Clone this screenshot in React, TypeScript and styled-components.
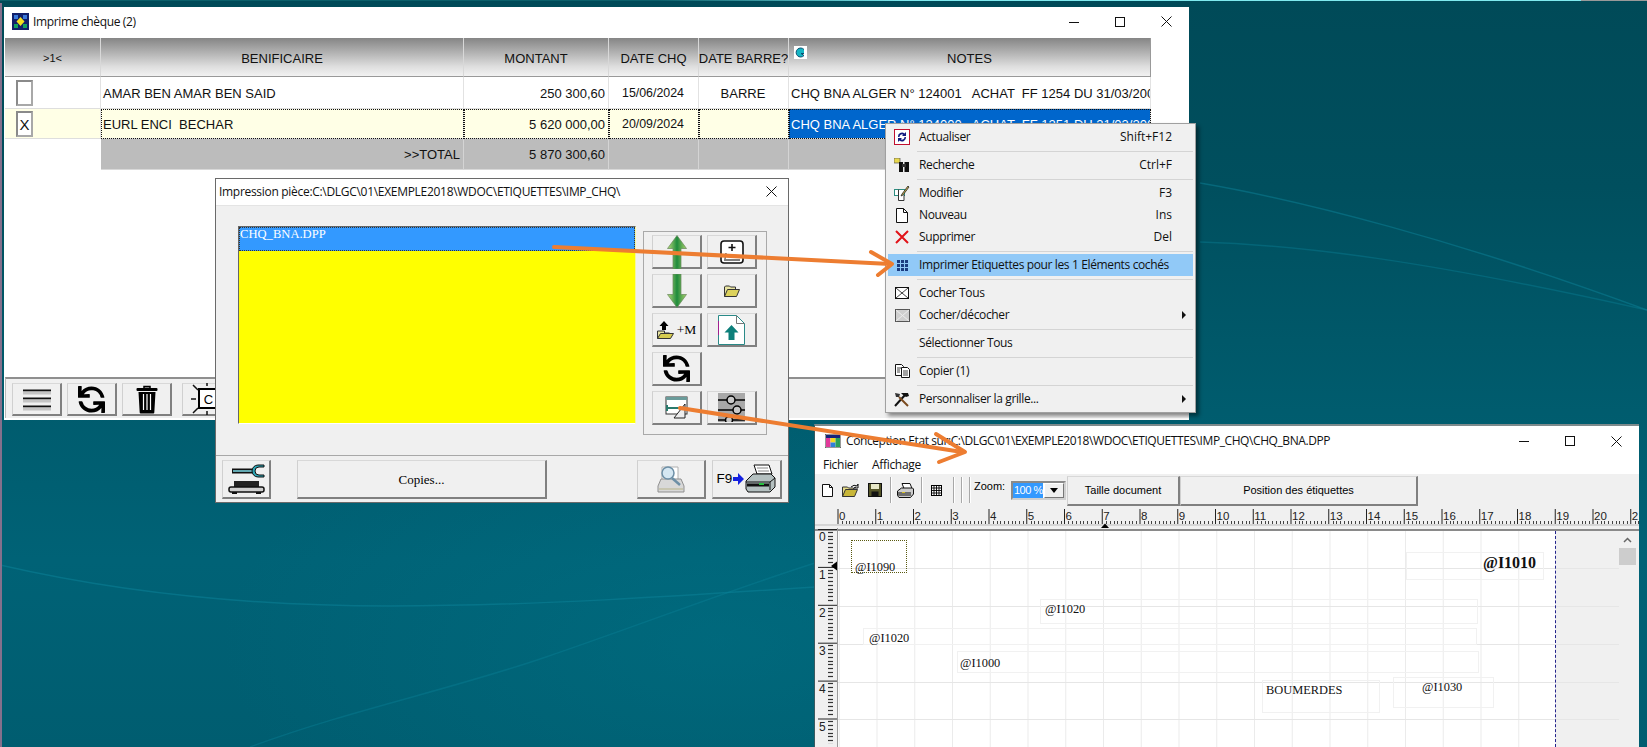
import React from 'react';
import styled, { createGlobalStyle } from 'styled-components';
import { FaSync } from 'react-icons/fa';

const Global = createGlobalStyle`
  html, body { margin: 0; padding: 0; width: 1647px; height: 747px; overflow: hidden; }
  #root { width: 1647px; height: 747px; }
  * { box-sizing: border-box; }
`;

const UI = `"Open Sans", "Noto Sans", sans-serif`;
const ARIAL = `"Liberation Sans", Arial, sans-serif`;
const TIMES = `"Liberation Serif", "Times New Roman", serif`;

const Desktop = styled.div`
  position: relative;
  width: 1647px;
  height: 747px;
  overflow: hidden;
  background:
    radial-gradient(ellipse 500px 240px at 720px 640px, rgba(0, 120, 140, 0.35), transparent),
    linear-gradient(180deg, #004a58 0%, #004f5e 25%, #005c6e 55%, #006276 75%, #005d70 100%);
`;
const Wallpaper = styled.svg`
  position: absolute;
  inset: 0;
`;
const TopLine = styled.div`
  position: absolute;
  left: 0;
  top: 0;
  width: 1647px;
  height: 1px;
  background: linear-gradient(90deg, #0b5f6a 0%, #0b5f6a 40%, #7fe9ee 55%, #7fe9ee 96%, #999 96%);
`;
const LeftEdge = styled.div`
  position: absolute;
  left: 0;
  top: 3px;
  width: 2px;
  bottom: 0;
  background: #84708c;
`;

const Win = styled.div<{ $x: number; $y: number; $w: number; $h: number; $z: number }>`
  position: absolute;
  left: ${p => p.$x}px;
  top: ${p => p.$y}px;
  width: ${p => p.$w}px;
  height: ${p => p.$h}px;
  z-index: ${p => p.$z};
  display: flex;
  flex-direction: column;
  background: #fff;
  overflow: hidden;
`;
const MainWin = styled(Win)``;
const DialogWin = styled(Win)`
  border: 1px solid #6a6a6a;
  background: #f0f0f0;
`;
const DesignWin = styled(Win)`
  border-top: 2px solid #7d8a8c;
  border-left: 1px solid #3a5a60;
`;

const TitleBar = styled.div<{ $h: number; $pb?: number; $ls?: number }>`
  height: ${p => p.$h}px;
  padding-bottom: ${p => p.$pb ?? 0}px;
  flex: none;
  background: #fff;
  display: flex;
  align-items: center;
  font: 12px/16px ${UI};
  letter-spacing: ${p => p.$ls ?? -0.35}px;
  color: #111;
`;
const TitleIcon = styled.span<{ $ml: number; $mr: number }>`
  display: inline-flex;
  margin-left: ${p => p.$ml}px;
  margin-right: ${p => p.$mr}px;
`;
const TitleText = styled.span<{ $ml?: number }>`
  flex: 1;
  white-space: pre;
  margin-left: ${p => p.$ml ?? 0}px;
`;
const Ctl = styled.span<{ $w?: number }>`
  width: ${p => p.$w ?? 46}px;
  height: 100%;
  display: inline-flex;
  align-items: center;
  justify-content: center;
`;

const GridWrap = styled.div`
  display: grid;
  grid-template-columns: 96px 363px 145px 90px 90px 362px;
  grid-template-rows: 39px 32px 30px 31px;
  margin-left: 1px;
  width: 1147px;
  font: 13px/15px ${ARIAL};
  color: #111;
`;
const HeadCell = styled.div<{ $small?: boolean }>`
  background: linear-gradient(180deg, #858585 0%, #b4b4b4 40%, #dedede 75%, #f2f2f2 100%);
  border-right: 1px solid #d8d8d8;
  border-bottom: 1px solid #999;
  padding-top: 2px;
  display: flex;
  align-items: center;
  justify-content: center;
  font-size: ${p => (p.$small ? 11 : 13)}px;
  white-space: nowrap;
  overflow: hidden;
  position: relative;
`;
const NotesHead = styled(HeadCell)`
  border-right: 1px solid #999;
`;
const HeadBadge = styled.span`
  position: absolute;
  left: 5px;
  top: 8px;
  display: inline-flex;
`;
const Cell = styled.div<{ $align?: string; $tone?: 'plain' | 'sel' | 'focus' | 'total' | 'blank'; $date?: boolean }>`
  display: flex;
  align-items: center;
  justify-content: ${p => p.$align ?? 'flex-start'};
  padding: 1px 3px 0 2px;
  white-space: pre;
  overflow: hidden;
  font-size: ${p => (p.$date ? 12.4 : 13)}px;
  border-right: 1px solid ${p => (p.$tone === 'blank' ? '#fff' : '#e2e2e2')};
  border-bottom: 1px solid #dedede;
  background: ${p =>
    p.$tone === 'sel' || p.$tone === 'focus'
      ? '#ffffe6'
      : p.$tone === 'total'
      ? '#bcbcbc'
      : '#fff'};
  ${p => p.$tone === 'focus' && 'outline: 1px dotted #111; outline-offset: -1px;'}
  ${p => p.$tone === 'total' && 'border-right-color: #d4d4d4; border-bottom-color: #d8d8d8;'}
  ${p => p.$tone === 'blank' && 'border-bottom-color: #fff;'}
`;
const NoteSelected = styled(Cell)`
  background: #0066cc;
  color: #fff;
  outline: 1px dotted #111;
  outline-offset: -1px;
`;
const CheckCell = styled(Cell)`
  padding-left: 11px;
`;
const CheckBox = styled.span`
  width: 17px;
  height: 26px;
  background: #fff;
  border: 2px solid #8a8a8a;
  border-right-color: #a8a8a8;
  border-bottom-color: #a8a8a8;
  display: flex;
  align-items: center;
  justify-content: center;
  font: 15px/1 ${ARIAL};
`;

const Spacer = styled.div`
  flex: 1;
`;
const MainToolbar = styled.div`
  height: 41px;
  margin-left: 1px;
  margin-bottom: 2px;
  flex: none;
  display: flex;
  align-items: flex-start;
  gap: 5px;
  padding: 4px 0 0 6px;
  background: #f0f0f0;
  border-top: 2px solid #8f8f8f;
  border-left: 1px solid #b8b8b8;
`;
const Raised = styled.button<{ $w: number; $h: number }>`
  width: ${p => p.$w}px;
  height: ${p => p.$h}px;
  flex: none;
  padding: 0;
  margin: 0;
  background: #f0f0f0;
  border: 1px solid #fff;
  border-left-color: #d0d0d0;
  border-top-color: #d8d8d8;
  border-right: 2px solid #808080;
  border-bottom: 2px solid #808080;
  display: inline-flex;
  align-items: center;
  justify-content: center;
  color: #000;
  position: relative;
`;
const SunBtn = styled(Raised)`
  margin-left: 5px;
`;

const DialogMain = styled.div`
  height: 251px;
  flex: none;
  display: flex;
  align-items: flex-start;
  padding: 20px 0 0 22px;
  gap: 7px;
  border-top: 1px solid #e4e4e4;
  border-bottom: 1px solid #a8a8a8;
`;
const ListBox = styled.div`
  width: 398px;
  height: 198px;
  background: #ffff00;
  border-top: 1px solid #666;
  border-left: 1px solid #666;
  border-right: 1px solid #f6f6a0;
  border-bottom: 1px solid #fff;
`;
const ListRow = styled.div`
  height: 24px;
  background: #3399ff;
  color: #fff;
  font: 12.6px/15px ${TIMES};
  padding-left: 1px;
  outline: 1px dotted #333;
  outline-offset: -1px;
`;
const ToolPanel = styled.div`
  width: 124px;
  height: 204px;
  margin-top: 5px;
  margin-left: 0;
  border: 1px solid #a9a9a9;
  display: grid;
  grid-template-columns: 50px 50px;
  grid-auto-rows: 34px;
  gap: 5px;
  padding: 3px 0 0 8px;
`;
const PlusM = styled.span`
  font: 13.5px/1 ${TIMES};
  margin-left: 3px;
`;
const DialogBottom = styled.div`
  flex: 1;
  display: flex;
  align-items: flex-start;
  padding: 4px 0 0 6px;
`;
const CopiesBtn = styled(Raised)`
  margin-left: 26px;
  margin-right: 90px;
  font: 13px/1 ${TIMES};
`;
const PrintBtn = styled(Raised)`
  margin-left: 6px;
  gap: 1px;
  font: 13.5px/1 ${ARIAL};
`;

const Menu = styled.div`
  position: absolute;
  left: 885px;
  top: 123px;
  width: 311px;
  height: 290px;
  z-index: 5;
  background: #f0f0f0;
  border: 1px solid #a0a0a0;
  box-shadow: 3px 3px 4px rgba(0, 0, 0, 0.45);
  padding: 2px 2px 0;
  font: 12px/16px ${UI};
  letter-spacing: -0.37px;
  color: #111;
`;
const MenuRow = styled.div<{ $active?: boolean }>`
  height: 22px;
  display: grid;
  grid-template-columns: 28px 1fr auto 21px;
  align-items: center;
  background: ${p => (p.$active ? '#91c9f7' : 'transparent')};
  white-space: nowrap;
`;
const MenuIcon = styled.span`
  display: flex;
  justify-content: center;
  padding-left: 0;
`;
const MenuLabel = styled.span`
  padding-left: 3px;
`;
const MenuKey = styled.span`
  letter-spacing: 0;
`;
const MenuArrow = styled.span`
  width: 0;
  height: 0;
  justify-self: end;
  margin-right: 7px;
  border-left: 4px solid #111;
  border-top: 4px solid transparent;
  border-bottom: 4px solid transparent;
`;
const MenuSep = styled.div`
  height: 6px;
  margin-left: 29px;
  display: flex;
  align-items: center;
  &::before {
    content: '';
    flex: 1;
    height: 1px;
    background: #d4d4d4;
  }
`;

const MenuBar = styled.div`
  height: 18px;
  flex: none;
  display: flex;
  align-items: center;
  gap: 14px;
  padding-left: 8px;
  font: 12px/16px ${UI};
  letter-spacing: -0.3px;
  color: #111;
`;
const DesignToolbar = styled.div`
  height: 32px;
  flex: none;
  background: #f0f0f0;
  display: flex;
  align-items: center;
  padding-left: 7px;
`;
const ToolIcon = styled.span<{ $ml: number }>`
  display: inline-flex;
  margin-left: ${p => p.$ml}px;
`;
const ToolSep = styled.span<{ $ml: number }>`
  width: 1px;
  height: 26px;
  background: #a8a8a8;
  box-shadow: 1px 0 #fff;
  margin-left: ${p => p.$ml}px;
`;
const ZoomLabel = styled.span`
  font: 11px/14px ${ARIAL};
  align-self: flex-start;
  margin: 5px 0 0 4px;
  width: 37px;
`;
const Combo = styled.div`
  width: 55px;
  height: 19px;
  margin-left: 0;
  background: #fff;
  border: 2px solid #8a8a8a;
  border-right-color: #d0d0d0;
  border-bottom-color: #d0d0d0;
  display: flex;
  font: 11px/15px ${ARIAL};
  letter-spacing: -0.5px;
`;
const ComboValue = styled.span`
  width: 30px;
  background: #3399ff;
  color: #fff;
  padding-left: 1px;
  white-space: nowrap;
`;
const ComboBtn = styled.span`
  flex: 1;
  margin-left: 1px;
  background: #f0f0f0;
  border: 1px solid #fff;
  border-right-color: #777;
  border-bottom-color: #777;
  display: flex;
  align-items: center;
  justify-content: center;
  &::before {
    content: '';
    border-top: 5px solid #000;
    border-left: 4px solid transparent;
    border-right: 4px solid transparent;
  }
`;
const DocBtn = styled(Raised)`
  font: 11px/1 ${ARIAL};
  margin-top: 1px;
`;
const TailleBtn = styled(DocBtn)`
  margin-left: 1px;
`;
const RulerRow = styled.div`
  height: 24px;
  flex: none;
  background: #f0f0f0;
  padding-top: 2px;
  overflow: hidden;
`;
const Body = styled.div`
  flex: 1;
  display: flex;
  min-height: 0;
  background: #f0f0f0;
  border-top: 2px solid #8a8a8a;
  margin-top: -1px;
`;
const VRuler = styled.div`
  width: 23px;
  flex: none;
  margin-top: -3px;
  border-right: 1px solid #999;
  overflow: hidden;
`;
const Page = styled.div`
  position: relative;
  width: 717px;
  flex: none;
  overflow: hidden;
  background-color: #fff;
  background-image:
    repeating-linear-gradient(180deg, transparent 0 36.9px, #e6e6e6 36.9px 37.9px),
    linear-gradient(90deg, #ebebeb 1px, transparent 1px);
  background-size: 100% 100%, 37.75px 100%;
  background-position: 0 0, 38.5px 0;
`;
const Margin = styled.div`
  width: 64px;
  flex: none;
  background-color: #f0f0f0;
  background-image: repeating-linear-gradient(180deg, transparent 0 36.9px, #e6e6e6 36.9px 37.9px);
  border-left: 1px dashed #24248c;
`;
const Scroll = styled.div`
  width: 17px;
  flex: none;
  background: #f0f0f0;
  display: flex;
  flex-direction: column;
  align-items: center;
  color: #666;
`;
const ScrollArrow = styled.span`
  height: 17px;
  display: flex;
  align-items: center;
`;
const ScrollThumb = styled.span`
  width: 17px;
  height: 17px;
  background: #cdcdcd;
`;
const RightEdge = styled.div`
  flex: 1;
  background: #f0f0f0;
`;
const Field = styled.div<{ $x: number; $y: number; $w: number; $h: number; $picked?: boolean }>`
  position: absolute;
  left: ${p => p.$x}px;
  top: ${p => p.$y}px;
  width: ${p => p.$w}px;
  height: ${p => p.$h}px;
  border: 1px ${p => (p.$picked ? 'dotted #5a5a10' : 'solid #f1f1f1')};
`;
const FieldText = styled.span<{ $x: number; $y: number; $bold?: boolean }>`
  position: absolute;
  left: ${p => p.$x}px;
  top: ${p => p.$y}px;
  font: ${p => (p.$bold ? 'bold 16px/18px' : '12.4px/14px')} ${TIMES};
  color: #111;
  white-space: nowrap;
`;
const Overlay = styled.svg`
  position: absolute;
  inset: 0;
  z-index: 9;
  pointer-events: none;
`;
const SyncIcon = styled(FaSync)<{ $s: number }>`
  width: ${p => p.$s}px;
  height: ${p => p.$s}px;
  transform: scaleX(-1);
  color: #000;
`;

/* ---------- icons ---------- */
const MinI = () => (
  <svg width="10" height="10" viewBox="0 0 10 10"><path d="M0 5.5H10" stroke="#111" /></svg>
);
const MaxI = () => (
  <svg width="10" height="10" viewBox="0 0 10 10"><rect x=".5" y=".5" width="9" height="9" fill="none" stroke="#111" /></svg>
);
const CloseI = () => (
  <svg width="11" height="11" viewBox="0 0 11 11"><path d="M.5.500l10 10M10.500.5l-10 10" stroke="#111" /></svg>
);
const AppIcon = () => (
  <svg width="17" height="17" viewBox="0 0 17 17">
    <rect width="17" height="17" fill="#10206a" />
    <path d="M8.500 4l4 4.500-4 4.500-4-4.500z" fill="#f4e020" />
    <rect x="2" y="2" width="4" height="4" fill="#3a78d8" />
    <rect x="11" y="2" width="4" height="4" fill="#3a78d8" />
    <rect x="2" y="11" width="4" height="4" fill="#10a060" />
    <rect x="11" y="11" width="4" height="4" fill="#10a060" />
  </svg>
);
const DesignIcon = () => (
  <svg width="16" height="14" viewBox="0 0 16 14">
    <rect width="16" height="14" fill="#fff" stroke="#333" />
    <rect x="1" y="1" width="14" height="3" fill="#16247a" />
    <rect x="1" y="4" width="4.500" height="9" fill="#e23a9a" />
    <rect x="5.500" y="4" width="5" height="4.500" fill="#f6d820" />
    <rect x="5.500" y="8.500" width="5" height="4.500" fill="#2f7fd8" />
    <rect x="10.500" y="4" width="4.500" height="9" fill="#2aa05a" />
  </svg>
);
const Badge = () => (
  <svg width="13" height="13" viewBox="0 0 13 13">
    <rect width="13" height="13" fill="#fff" />
    <path d="M10 3.500A4.500 4.500 0 1 0 10 9.500L7 7.500h3" fill="#15b6c4" stroke="#0a4f70" />
  </svg>
);
const Burger = () => (
  <svg width="30" height="26" viewBox="0 0 30 26">
    <path d="M1 4.500H29M1 12.500H29M1 20.500H29" stroke="#111" strokeWidth="2" />
    <path d="M1 7H29M1 15H29M1 23H29" stroke="#c4c4c4" strokeWidth="3" />
  </svg>
);
const Trash = () => (
  <svg width="22" height="30" viewBox="0 0 22 30">
    <path d="M8 2.500h6v2H8z" fill="none" stroke="#000" strokeWidth="1.500" />
    <rect x="0.500" y="4" width="21" height="3" fill="#000" rx="1" />
    <path d="M2.500 8h17l-1.200 20.500a1 1 0 0 1-1 1H4.700a1 1 0 0 1-1-1z" fill="#000" />
    <path d="M7.500 10v16M11 10v16M14.500 10v16" stroke="#fff" strokeWidth="1.200" />
  </svg>
);
const Sun = () => (
  <svg width="36" height="32" viewBox="0 0 36 32">
    <rect x="10" y="6" width="19" height="19" fill="#fff" stroke="#000" strokeWidth="2" />
    <text x="19.500" y="20.500" textAnchor="middle" fontFamily={ARIAL} fontSize="13" fill="#000">C</text>
    <path d="M18 0v3M18 28v4M2 16h5M32 16h4M4 2l5 5M4 30l5-5M32 2l-4 4M32 30l-4-4" stroke="#111" strokeWidth="1.500" />
  </svg>
);
const UpGreen = () => (
  <svg width="20" height="34" viewBox="0 0 20 34">
    <defs>
      <linearGradient id="gr" x1="0" x2="1" y1="0" y2="0">
        <stop offset="0" stopColor="#b9dd7c" />
        <stop offset=".5" stopColor="#1f8a3c" />
        <stop offset="1" stopColor="#a9d26c" />
      </linearGradient>
    </defs>
    <path d="M10 0.500l9.500 13H14V34H6V13.500H.5z" fill="url(#gr)" stroke="#65855a" strokeWidth=".7" />
  </svg>
);
const DownGreen = () => (
  <svg width="20" height="34" viewBox="0 0 20 34">
    <path d="M6 0h8v20.500h5.500L10 33.500.5 20.500H6z" fill="url(#gr)" stroke="#65855a" strokeWidth=".7" />
  </svg>
);
const CardPlus = () => (
  <svg width="24" height="24" viewBox="0 0 24 24">
    <rect x="1" y="1" width="22" height="22" rx="3" fill="#fff" stroke="#111" strokeWidth="1.600" />
    <path d="M12 4v7M8.500 7.500h7" stroke="#111" strokeWidth="1.600" />
    <path d="M6 13l-1 6M10 16h1M14 16h1M18 16h1M4 20h16" stroke="#555" strokeWidth="1.300" />
  </svg>
);
const Folder = () => (
  <svg width="16" height="12" viewBox="0 0 16 12">
    <path d="M.5 11.500V2l1-1h4l1 1h5v2" fill="#e8e4a0" stroke="#333" />
    <path d="M.5 11.500l3-7h12l-3 7z" fill="#dcd25c" stroke="#333" />
  </svg>
);
const FolderUp = () => (
  <svg width="17" height="18" viewBox="0 0 17 18">
    <path d="M.5 17.500V10h7v2h5v2" fill="#e8e4a0" stroke="#333" />
    <path d="M.5 17.500l3-5h13l-3 5z" fill="#d6cc50" stroke="#333" />
    <path d="M7 0L2.500 5H5v4h4V5h2.500z" fill="#000" />
  </svg>
);
const DocUp = () => (
  <svg width="27" height="30" viewBox="0 0 27 30">
    <path d="M.5.500h18l8 8v21H.5z" fill="#fff" stroke="#2a8a88" />
    <path d="M.5 6v14" stroke="#a02090" />
    <path d="M18.500.5v8h8" fill="none" stroke="#777" />
    <path d="M13.500 10l7 7.500h-4V25h-6v-7.500h-4z" fill="#0d7f7a" />
  </svg>
);
const WinEdit = () => (
  <svg width="24" height="24" viewBox="0 0 24 24">
    <rect x="1" y="1" width="21" height="17" fill="#fff" stroke="#333" />
    <path d="M1 1h21v3H1z" fill="#6a9b9a" />
    <path d="M9 22l11-14v14z" fill="#eee" stroke="#222" />
    <path d="M14 12H2M2 9v6" stroke="#2b7a6c" strokeWidth="2" />
  </svg>
);
const Sliders = () => (
  <svg width="27" height="29" viewBox="0 0 27 29">
    <rect width="27" height="29" fill="#a8a8a8" />
    <path d="M0 7h27M0 17h27M0 27h27" stroke="#000" strokeWidth="1.500" />
    <circle cx="13" cy="7" r="4" fill="#c8c8c8" stroke="#000" strokeWidth="1.500" />
    <circle cx="19" cy="17" r="4" fill="#c8c8c8" stroke="#000" strokeWidth="1.500" />
    <circle cx="11" cy="27" r="3.500" fill="#c8c8c8" stroke="#000" strokeWidth="1.500" />
  </svg>
);
const ScaleWrench = () => (
  <svg width="37" height="32" viewBox="0 0 37 32">
    <path d="M4 8h23" stroke="#111" strokeWidth="5" />
    <path d="M5 8h22" stroke="#7fdce8" strokeWidth="1.500" />
    <path d="M36 2h-6a6 6 0 0 0 0 12h6v-2h-5a4 4 0 0 1 0-8h5z" fill="#2aa4b4" stroke="#111" />
    <rect x="6" y="18" width="25" height="6" fill="#222" />
    <rect x="1" y="24" width="35" height="5" rx="2" fill="#cfcfcf" stroke="#111" strokeWidth="1.500" />
    <path d="M4 30h5M28 30h5" stroke="#111" strokeWidth="2" />
  </svg>
);
const Preview = () => (
  <svg width="30" height="30" viewBox="0 0 30 30">
    <path d="M6 3h16v14H6z" fill="#fff" stroke="#b0b0b0" />
    <path d="M2 22l3-7h20l3 7v6H2z" fill="#d8d8d8" stroke="#8f8f8f" />
    <path d="M3 25h24" stroke="#b7b38a" />
    <circle cx="12" cy="9" r="6" fill="#d5e7f2" stroke="#6d8fa6" strokeWidth="1.500" />
    <path d="M16 14l8 7" stroke="#6d8fa6" strokeWidth="2.500" />
  </svg>
);
const PrinterBig = () => (
  <svg width="31" height="30" viewBox="0 0 31 30">
    <path d="M9 1h15l3 9H12z" fill="#fff" stroke="#111" />
    <path d="M12 4h11M13 7h11" stroke="#888" />
    <path d="M1 17l7-7h18l4 4v9l-5 5H3l-2-3z" fill="#b4c0c0" stroke="#111" />
    <path d="M1 18h24v8" fill="none" stroke="#111" />
    <path d="M2 21h22" stroke="#111" strokeWidth="3" />
    <rect x="14" y="19" width="5" height="2" fill="#28c040" />
    <path d="M25 18l5-4" stroke="#111" />
  </svg>
);
const BlueArrow = () => (
  <svg width="11" height="12" viewBox="0 0 11 12"><path d="M0 4h5V0l6 6-6 6V8H0z" fill="#1420e0" /></svg>
);

const MI = {
  refresh: (
    <svg width="16" height="16" viewBox="0 0 16 16">
      <rect x=".5" y=".5" width="15" height="15" fill="#fff" stroke="#c01030" />
      <path d="M4 8a4 4 0 0 1 6.500-3.500L12 3v4H8l1.200-1.300A2.500 2.500 0 0 0 5.500 8z" fill="#121a80" />
      <path d="M12 8a4 4 0 0 1-6.500 3.500L4 13V9h4l-1.200 1.300A2.500 2.500 0 0 0 10.500 8z" fill="#121a80" />
    </svg>
  ),
  find: (
    <svg width="16" height="14" viewBox="0 0 16 14">
      <rect x="0" y="0" width="6" height="5" fill="#e8d84c" stroke="#555" strokeWidth=".7" />
      <path d="M5 4h4v10H5zM10.500 4H15v10h-4.500z" fill="#111" />
      <path d="M8 6h4v3H8z" fill="#333" />
    </svg>
  ),
  edit: (
    <svg width="16" height="16" viewBox="0 0 16 16">
      <rect x=".5" y="4.500" width="10" height="6" fill="#fff" stroke="#2c8d80" />
      <path d="M4.500 4.500V15.500H10V10" fill="#fff" stroke="#333" />
      <path d="M14 1L8 9l-1 2 2-1 6-8z" fill="#d6b84c" stroke="#222" strokeWidth=".8" />
    </svg>
  ),
  page: (
    <svg width="12" height="15" viewBox="0 0 12 15">
      <path d="M.5.500h7l4 4v10H.5z" fill="#fff" stroke="#111" />
      <path d="M7.500.5v4h4" fill="none" stroke="#111" />
    </svg>
  ),
  del: (
    <svg width="14" height="14" viewBox="0 0 14 14"><path d="M1 1l12 12M13 1L1 13" stroke="#e21218" strokeWidth="2" /></svg>
  ),
  grid: (
    <svg width="11" height="11" viewBox="0 0 11 11" fill="#1b3b80">
      {[0, 4, 8].flatMap(x => [0, 4, 8].map(y => <rect key={`${x}-${y}`} x={x} y={y} width="3" height="3" />))}
    </svg>
  ),
  check: (
    <svg width="14" height="12" viewBox="0 0 14 12">
      <rect x=".5" y=".5" width="13" height="11" fill="#fff" stroke="#111" />
      <path d="M1 1l12 10M13 1L1 11" stroke="#111" strokeWidth=".8" />
    </svg>
  ),
  checkGrey: (
    <svg width="15" height="13" viewBox="0 0 15 13">
      <rect x=".5" y=".5" width="14" height="12" fill="#cfcfcf" stroke="#555" />
      <path d="M1 1l13 11M14 1L1 12" stroke="#eee" />
    </svg>
  ),
  copy: (
    <svg width="15" height="14" viewBox="0 0 15 14">
      <path d="M.5.500h6l2 2v9H.5z" fill="#fff" stroke="#111" />
      <path d="M6.500 3.500h6l2 2v8h-8z" fill="#fff" stroke="#111" />
      <path d="M2 4h4M2 6h3M2 8h3M8 7h5M8 9h5M8 11h5" stroke="#111" strokeWidth=".8" />
    </svg>
  ),
  tools: (
    <svg width="16" height="15" viewBox="0 0 16 15">
      <path d="M1 14L11 3" stroke="#111" strokeWidth="2" />
      <path d="M7 1h7l1 3-3 1-3-2z" fill="#111" />
      <path d="M14 14L5 5" stroke="#7a4a1e" strokeWidth="2" />
      <path d="M1 1l5 1-1 3-3 0z" fill="#333" />
    </svg>
  ),
};

const TNew = () => (
  <svg width="11" height="13" viewBox="0 0 11 13"><path d="M.5.500h7l3 3v9H.5z" fill="#fff" stroke="#111" /><path d="M7.500.5v3h3" fill="none" stroke="#111" /></svg>
);
const TOpen = () => (
  <svg width="17" height="13" viewBox="0 0 17 13">
    <path d="M.5 12.500V3h5l1 1h5v2" fill="#e6dc88" stroke="#333" />
    <path d="M.5 12.500l3-7h12l-3 7z" fill="#c8b638" stroke="#333" />
    <path d="M9 3q3-3 6-1l1-2v4h-4l2-1" fill="none" stroke="#111" />
  </svg>
);
const TSave = () => (
  <svg width="14" height="14" viewBox="0 0 14 14">
    <rect x=".5" y=".5" width="13" height="13" fill="#555528" stroke="#111" />
    <rect x="3" y="1" width="8" height="5" fill="#e8e8c8" />
    <rect x="3.500" y="8.500" width="7" height="5" fill="#111" />
  </svg>
);
const TPrint = () => (
  <svg width="17" height="15" viewBox="0 0 17 15">
    <path d="M5 .5h8l2 5H7z" fill="#fff" stroke="#111" />
    <path d="M.5 8l4-3h11l1 1v5l-3 3.500H2l-1.500-2z" fill="#ccc" stroke="#111" />
    <path d="M1 10h13M1 12h13" stroke="#111" />
    <rect x="5" y="9" width="3" height="1" fill="#d8c020" />
  </svg>
);
const TGrid = () => (
  <svg width="11" height="11" viewBox="0 0 11 11">
    <rect x=".5" y=".5" width="10" height="10" fill="#fff" stroke="#000" />
    <path d="M.5 3h10M.5 5.500h10M.5 8h10M3 .5v10M5.500.5v10M8 .5v10" stroke="#000" strokeWidth=".9" />
  </svg>
);

const cmW = 37.75;
const HRuler = () => {
  const ticks: React.ReactElement[] = [];
  for (let i = 0; i < 22; i++) {
    const x = 23 + i * cmW;
    ticks.push(<path key={`c${i}`} d={`M${x} 1V16`} stroke="#222" />);
    ticks.push(
      <text key={`t${i}`} x={x + 1} y={12} fontFamily={ARIAL} fontSize="11.5" fill="#222">
        {i}
      </text>
    );
    for (let j = 1; j < 10; j++) {
      const tx = Math.round(x + (j * cmW) / 10) + 0.5;
      ticks.push(<path key={`m${i}-${j}`} d={`M${tx} 13V16`} stroke="#444" />);
    }
  }
  return (
    <svg width="824" height="21" viewBox="0 0 824 21">
      <path d="M0 17H824" stroke="#bbb" />
      {ticks}
      <path d="M286 18l4 -0 4 0-4-4.500z" fill="#000" transform="translate(0 2)" />
    </svg>
  );
};
const VRulerArt = () => {
  const items: React.ReactElement[] = [];
  for (let i = 0; i < 6; i++) {
    const y = 0 + i * 37.9;
    items.push(<path key={`l${i}`} d={`M3 ${y + 1.5}H22`} stroke="#222" />);
    items.push(
      <text key={`n${i}`} x="4" y={y + 13} fontFamily={ARIAL} fontSize="12" fill="#222">
        {i}
      </text>
    );
    for (let j = 1; j < 10; j++) {
      const ty = Math.round(y + j * 3.79) + 0.5;
      items.push(<path key={`d${i}-${j}`} d={`M13 ${ty}H18`} stroke="#333" strokeWidth="1.200" />);
    }
  }
  return (
    <svg width="22" height="216" viewBox="0 0 22 216">
      {items}
      <path d="M16 38l6-4.500v9z" fill="#000" />
    </svg>
  );
};

const menu = [
  { l: 'Actualiser', k: 'Shift+F12', i: MI.refresh },
  'sep',
  { l: 'Recherche', k: 'Ctrl+F', i: MI.find },
  'sep',
  { l: 'Modifier', k: 'F3', i: MI.edit },
  { l: 'Nouveau', k: 'Ins', i: MI.page },
  { l: 'Supprimer', k: 'Del', i: MI.del },
  'sep',
  { l: 'Imprimer Etiquettes pour les 1 Eléments cochés', i: MI.grid, active: true },
  'sep',
  { l: 'Cocher Tous', i: MI.check },
  { l: 'Cocher/décocher', i: MI.checkGrey, sub: true },
  'sep',
  { l: 'Sélectionner Tous' },
  'sep',
  { l: 'Copier (1)', i: MI.copy },
  'sep',
  { l: 'Personnaliser la grille...', i: MI.tools, sub: true },
] as const;

export default function App() {
  return (
    <Desktop>
      <Global />
      <Wallpaper width="1647" height="747" viewBox="0 0 1647 747">
        <g fill="none" stroke="#0b8298" strokeWidth="1.500">
          <path d="M0 565C130 595 260 606 390 606C530 606 680 596 815 587" opacity=".55" />
          <path d="M250 747C350 710 450 690 546 657C640 625 730 590 815 563" opacity=".4" />
          <path d="M1200 183C1300 200 1457 240 1647 310" opacity=".5" />
          <path d="M1200 242C1300 245 1423 260 1647 310" opacity=".4" />
        </g>
      </Wallpaper>
      <TopLine />
      <LeftEdge />

      <MainWin $x={4} $y={7} $w={1185} $h={413} $z={1}>
        <TitleBar $h={31} $pb={2}>
          <TitleIcon $ml={8} $mr={4}><AppIcon /></TitleIcon>
          <TitleText>Imprime chèque (2)</TitleText>
          <Ctl><MinI /></Ctl>
          <Ctl><MaxI /></Ctl>
          <Ctl><CloseI /></Ctl>
        </TitleBar>
        <GridWrap>
          <HeadCell $small>&gt;1&lt;</HeadCell>
          <HeadCell>BENIFICAIRE</HeadCell>
          <HeadCell>MONTANT</HeadCell>
          <HeadCell>DATE CHQ</HeadCell>
          <HeadCell>DATE BARRE?</HeadCell>
          <NotesHead>
            <HeadBadge><Badge /></HeadBadge>
            NOTES
          </NotesHead>

          <CheckCell><CheckBox /></CheckCell>
          <Cell>AMAR BEN AMAR BEN SAID</Cell>
          <Cell $align="flex-end">250 300,60</Cell>
          <Cell $date $align="center">15/06/2024</Cell>
          <Cell $align="center">BARRE</Cell>
          <Cell>CHQ BNA ALGER N° 124001   ACHAT  FF 1254 DU 31/03/2005</Cell>

          <CheckCell $tone="sel"><CheckBox>X</CheckBox></CheckCell>
          <Cell $tone="focus">EURL ENCI  BECHAR</Cell>
          <Cell $tone="focus" $align="flex-end">5 620 000,00</Cell>
          <Cell $date $tone="focus" $align="center">20/09/2024</Cell>
          <Cell $tone="focus" />
          <NoteSelected>CHQ BNA ALGER N° 124000   ACHAT  FF 1251 DU 31/03/2005</NoteSelected>

          <Cell $tone="blank" />
          <Cell $tone="total" $align="flex-end">&gt;&gt;TOTAL</Cell>
          <Cell $tone="total" $align="flex-end">5 870 300,60</Cell>
          <Cell $tone="total" />
          <Cell $tone="total" />
          <Cell $tone="total" />
        </GridWrap>
        <Spacer />
        <MainToolbar>
          <Raised $w={50} $h={33}><Burger /></Raised>
          <Raised $w={50} $h={33}><SyncIcon $s={27} /></Raised>
          <Raised $w={50} $h={33}><Trash /></Raised>
          <SunBtn $w={50} $h={33}><Sun /></SunBtn>
        </MainToolbar>
      </MainWin>

      <DesignWin $x={814} $y={424} $w={825} $h={323} $z={2}>
        <TitleBar $h={30} $ls={-0.42}>
          <TitleIcon $ml={10} $mr={5}><DesignIcon /></TitleIcon>
          <TitleText>Conception Etat sur:C:\DLGC\01\EXEMPLE2018\WDOC\ETIQUETTES\IMP_CHQ\CHQ_BNA.DPP</TitleText>
          <Ctl><MinI /></Ctl>
          <Ctl><MaxI /></Ctl>
          <Ctl><CloseI /></Ctl>
        </TitleBar>
        <MenuBar>
          <span>Fichier</span>
          <span>Affichage</span>
        </MenuBar>
        <DesignToolbar>
          <ToolIcon $ml={0}><TNew /></ToolIcon>
          <ToolIcon $ml={9}><TOpen /></ToolIcon>
          <ToolIcon $ml={9}><TSave /></ToolIcon>
          <ToolSep $ml={8} />
          <ToolIcon $ml={6}><TPrint /></ToolIcon>
          <ToolSep $ml={7} />
          <ToolIcon $ml={9}><TGrid /></ToolIcon>
          <ToolSep $ml={11} />
          <ToolSep $ml={7} />
          <ToolSep $ml={7} />
          <ZoomLabel>Zoom:</ZoomLabel>
          <Combo>
            <ComboValue>100 %</ComboValue>
            <ComboBtn />
          </Combo>
          <TailleBtn $w={113} $h={30}>Taille document</TailleBtn>
          <DocBtn $w={238} $h={30}>Position des étiquettes</DocBtn>
        </DesignToolbar>
        <RulerRow><HRuler /></RulerRow>
        <Body>
          <VRuler><VRulerArt /></VRuler>
          <Page>
            <Field $picked $x={13} $y={9} $w={56} $h={33} />
            <Field $x={568} $y={21} $w={138} $h={28} />
            <Field $x={202} $y={68} $w={438} $h={25} />
            <Field $x={25} $y={97} $w={614} $h={17} />
            <Field $x={119} $y={120} $w={522} $h={22} />
            <Field $x={424} $y={149} $w={118} $h={33} />
            <Field $x={555} $y={146} $w={101} $h={31} />
            <FieldText $x={17} $y={29}>@I1090</FieldText>
            <FieldText $bold $x={645} $y={23}>@I1010</FieldText>
            <FieldText $x={207} $y={71}>@I1020</FieldText>
            <FieldText $x={31} $y={100}>@I1020</FieldText>
            <FieldText $x={122} $y={125}>@I1000</FieldText>
            <FieldText $x={428} $y={152}>BOUMERDES</FieldText>
            <FieldText $x={584} $y={149}>@I1030</FieldText>
          </Page>
          <Margin />
          <Scroll>
            <ScrollArrow>
              <svg width="9" height="6" viewBox="0 0 9 6"><path d="M1 5l3.500-3.500L8 5" fill="none" stroke="#666" strokeWidth="1.500" /></svg>
            </ScrollArrow>
            <ScrollThumb />
          </Scroll>
          <RightEdge />
        </Body>
      </DesignWin>

      <DialogWin $x={215} $y={178} $w={574} $h={325} $z={3}>
        <TitleBar $h={26} $pb={1} $ls={-0.3}>
          <TitleText $ml={3}>Impression pièce:C:\DLGC\01\EXEMPLE2018\WDOC\ETIQUETTES\IMP_CHQ\</TitleText>
          <Ctl $w={33}><CloseI /></Ctl>
        </TitleBar>
        <DialogMain>
          <ListBox><ListRow>CHQ_BNA.DPP</ListRow></ListBox>
          <ToolPanel>
            <Raised $w={50} $h={34}><UpGreen /></Raised>
            <Raised $w={50} $h={34}><CardPlus /></Raised>
            <Raised $w={50} $h={34}><DownGreen /></Raised>
            <Raised $w={50} $h={34}><Folder /></Raised>
            <Raised $w={50} $h={34}><FolderUp /><PlusM>+M</PlusM></Raised>
            <Raised $w={50} $h={34}><DocUp /></Raised>
            <Raised $w={50} $h={34}><SyncIcon $s={27} /></Raised>
            <span />
            <Raised $w={50} $h={34}><WinEdit /></Raised>
            <Raised $w={50} $h={34}><Sliders /></Raised>
          </ToolPanel>
        </DialogMain>
        <DialogBottom>
          <Raised $w={49} $h={39}><ScaleWrench /></Raised>
          <CopiesBtn $w={250} $h={39}>Copies...</CopiesBtn>
          <Raised $w={69} $h={39}><Preview /></Raised>
          <PrintBtn $w={70} $h={39}>F9<BlueArrow /><PrinterBig /></PrintBtn>
        </DialogBottom>
      </DialogWin>

      <Menu>
        {menu.map((m, idx) =>
          m === 'sep' ? (
            <MenuSep key={idx} />
          ) : (
            <MenuRow key={idx} $active={'active' in m}>
              <MenuIcon>{'i' in m ? m.i : null}</MenuIcon>
              <MenuLabel>{m.l}</MenuLabel>
              <MenuKey>{'k' in m ? m.k : ''}</MenuKey>
              {'sub' in m ? <MenuArrow /> : <span />}
            </MenuRow>
          )
        )}
      </Menu>

      <Overlay width="1647" height="747" viewBox="0 0 1647 747">
        <g fill="none" stroke="#ed7d31" strokeWidth="4" strokeLinecap="round" strokeLinejoin="round">
          <path d="M554 247L890 264" />
          <path d="M871 252L892 264L878 275" />
          <path d="M680 408L962 452" />
          <path d="M936 434L965 452L939 462" />
        </g>
      </Overlay>
    </Desktop>
  );
}
